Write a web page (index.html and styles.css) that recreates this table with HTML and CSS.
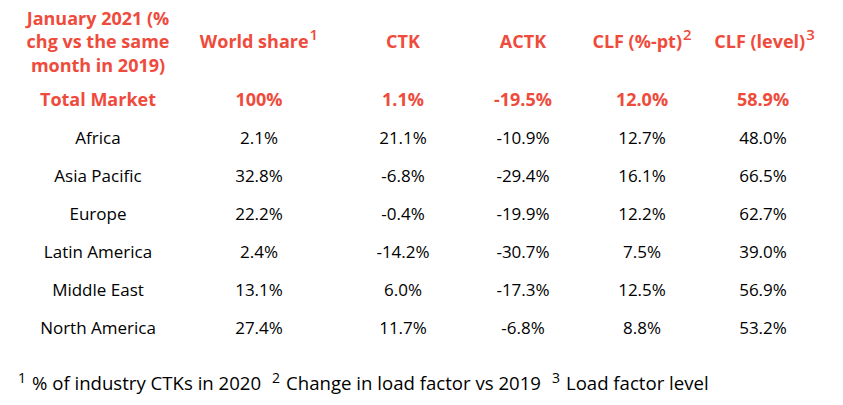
FILE: index.html
```html
<!DOCTYPE html>
<html>
<head>
<meta charset="utf-8">
<link rel="stylesheet" href="styles.css">
</head>
<body>
<div class="table">
  <div class="row head">
    <div class="cell first">January 2021 (%<br>chg vs the same<br>month in 2019)</div>
    <div class="cell">World share<sup>1</sup></div>
    <div class="cell">CTK</div>
    <div class="cell">ACTK</div>
    <div class="cell">CLF (%-pt)<sup>2</sup></div>
    <div class="cell last">CLF (level)<sup>3</sup></div>
  </div>
  <div class="row total">
    <div class="cell">Total Market</div>
    <div class="cell">100%</div>
    <div class="cell">1.1%</div>
    <div class="cell">-19.5%</div>
    <div class="cell">12.0%</div>
    <div class="cell">58.9%</div>
  </div>
  <div class="row">
    <div class="cell">Africa</div>
    <div class="cell">2.1%</div>
    <div class="cell">21.1%</div>
    <div class="cell">-10.9%</div>
    <div class="cell">12.7%</div>
    <div class="cell">48.0%</div>
  </div>
  <div class="row">
    <div class="cell">Asia Pacific</div>
    <div class="cell">32.8%</div>
    <div class="cell">-6.8%</div>
    <div class="cell">-29.4%</div>
    <div class="cell">16.1%</div>
    <div class="cell">66.5%</div>
  </div>
  <div class="row">
    <div class="cell">Europe</div>
    <div class="cell">22.2%</div>
    <div class="cell">-0.4%</div>
    <div class="cell">-19.9%</div>
    <div class="cell">12.2%</div>
    <div class="cell">62.7%</div>
  </div>
  <div class="row">
    <div class="cell">Latin America</div>
    <div class="cell">2.4%</div>
    <div class="cell">-14.2%</div>
    <div class="cell">-30.7%</div>
    <div class="cell">7.5%</div>
    <div class="cell">39.0%</div>
  </div>
  <div class="row">
    <div class="cell">Middle East</div>
    <div class="cell">13.1%</div>
    <div class="cell">6.0%</div>
    <div class="cell">-17.3%</div>
    <div class="cell">12.5%</div>
    <div class="cell">56.9%</div>
  </div>
  <div class="row">
    <div class="cell">North America</div>
    <div class="cell">27.4%</div>
    <div class="cell">11.7%</div>
    <div class="cell">-6.8%</div>
    <div class="cell">8.8%</div>
    <div class="cell">53.2%</div>
  </div>
</div>
<p class="notes"><sup class="n1">1</sup>% of industry CTKs in 2020<sup>2</sup>Change in load factor vs 2019<sup>3</sup>Load factor level</p>
</body>
</html>
```
FILE: styles.css
```css
html, body {
  margin: 0;
  padding: 0;
  background: #ffffff;
}
body {
  font-family: "Open Sans", "Noto Sans", sans-serif;
  color: #000000;
  width: 843px;
  height: 405px;
  overflow: hidden;
}
.table {
  padding-top: 6px;
}
.row {
  display: grid;
  grid-template-columns: 196px 126px 162px 78px 160px 82px;
  height: 38px;
  align-items: center;
  font-size: 17px;
}
.cell {
  text-align: center;
  white-space: nowrap;
}
.head {
  height: 72px;
  color: #ef4b3c;
  font-weight: 700;
  font-size: 18px;
  line-height: 23.5px;
}
.head sup {
  font-size: 15px;
  font-weight: 600;
  vertical-align: 8px;
  line-height: 0;
  margin-left: 1px;
}
.head .last {
  margin: 0 -23px 0 -20px;
}
.total {
  color: #ef4b3c;
  font-weight: 700;
  font-size: 18px;
  margin-top: 2px;
}
.notes {
  margin: 24px 0 0 18px;
  font-size: 18.6px;
  white-space: nowrap;
}
.notes sup {
  font-size: 14px;
  vertical-align: 7px;
  line-height: 0;
  margin-left: 11px;
  margin-right: 6px;
}
.notes sup.n1 {
  margin-left: 0;
}
```
